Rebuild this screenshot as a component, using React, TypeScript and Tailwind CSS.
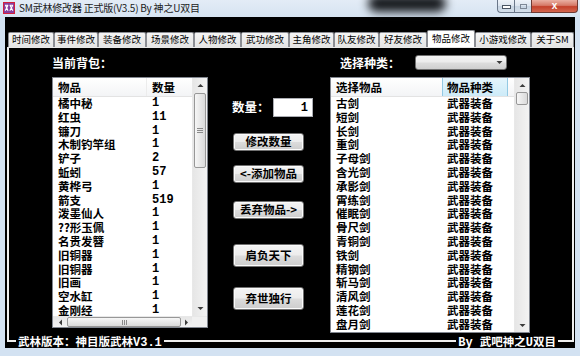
import React from "react";

const CJK = "font-['Noto_Sans_CJK_SC','Noto_Sans',sans-serif]";
const MONO = "font-['Liberation_Mono','Noto_Sans_CJK_SC',monospace]";

const tabs = [
  { label: "时间修改", w: "w-[46px]" },
  { label: "事件修改", w: "w-[44px]" },
  { label: "装备修改", w: "w-[48px]" },
  { label: "场景修改", w: "w-[48px]" },
  { label: "人物修改", w: "w-[47px]" },
  { label: "武功修改", w: "w-[48px]" },
  { label: "主角修改", w: "w-[45px]" },
  { label: "队友修改", w: "w-[45px]" },
  { label: "好友修改", w: "w-[48px]" },
  { label: "物品修改", w: "w-[48px]", sel: true },
  { label: "小游戏修改", w: "w-[56px]" },
  { label: "关于SM", w: "w-[43px]" },
];

const bag: [string, string][] = [
  ["橘中秘", "1"],
  ["红虫", "11"],
  ["镰刀", "1"],
  ["木制钓竿组", "1"],
  ["铲子", "2"],
  ["蚯蚓", "57"],
  ["黄桦弓", "1"],
  ["箭支", "519"],
  ["泼墨仙人", "1"],
  ["??形玉佩", "1"],
  ["名贵发簪", "1"],
  ["旧铜器", "1"],
  ["旧铜器", "1"],
  ["旧画", "1"],
  ["空水缸", "1"],
  ["金刚经", "1"],
];

const items = [
  "古剑", "短剑", "长剑", "重剑", "子母剑", "含光剑", "承影剑", "霄练剑", "催眠剑",
  "骨尺剑", "青铜剑", "铁剑", "精钢剑", "斩马剑", "清风剑", "莲花剑", "盘月剑",
];

function Tri({ dir }: { dir: "up" | "down" | "left" | "right" }) {
  const d =
    dir === "up"
      ? "M0.5 4 L3.5 1 L6.5 4 Z"
      : dir === "down"
      ? "M0.5 1 L3.5 4 L6.5 1 Z"
      : dir === "left"
      ? "M4 0.5 L1 3.5 L4 6.5 Z"
      : "M1 0.5 L4 3.5 L1 6.5 Z";
  const w = dir === "up" || dir === "down" ? 7 : 5;
  const h = dir === "up" || dir === "down" ? 5 : 7;
  return (
    <svg width={w} height={h} viewBox={`0 0 ${w} ${h}`}>
      <path d={d} fill="#3c3c3c" />
    </svg>
  );
}

function Grip({ vertical }: { vertical: boolean }) {
  return vertical ? (
    <div className="flex flex-col gap-[1px]">
      <div className="w-[6px] h-[1px] bg-[#8a8a8a]" />
      <div className="w-[6px] h-[1px] bg-[#8a8a8a]" />
      <div className="w-[6px] h-[1px] bg-[#8a8a8a]" />
    </div>
  ) : (
    <div className="flex gap-[1px]">
      <div className="w-[1px] h-[5px] bg-[#8a8a8a]" />
      <div className="w-[1px] h-[5px] bg-[#8a8a8a]" />
      <div className="w-[1px] h-[5px] bg-[#8a8a8a]" />
    </div>
  );
}

function Btn({ label, h, mt }: { label: string; h: string; mt: string }) {
  return (
    <div
      className={`${mt} ${h} w-[71px] ml-[25px] flex items-center justify-center rounded-[3px] border border-[#707070] bg-[linear-gradient(#f4f4f4_0%,#ececec_48%,#dcdcdc_52%,#cdcdcd_100%)] shadow-[inset_0_0_0_1px_#fbfbfb] text-[11.5px] font-bold text-black leading-none`}
    >
      {label}
    </div>
  );
}

export default function App() {
  return (
    <div className={`w-[580px] h-[356px] bg-[#d3e2f2] flex flex-col overflow-hidden ${CJK}`}>
      {/* title bar */}
      <div className="relative h-[17px] flex items-start bg-[linear-gradient(#e3ecf6,#d6e3f1)]">
        <div className="absolute left-[368px] top-[-5px] w-[78px] h-[17px] rounded-full bg-[#15181c] blur-[5px]" />
        <div className="pl-[3px] pt-[2px]">
          <svg width="12" height="12" viewBox="0 0 12 12">
            <rect x="0.5" y="0.5" width="11" height="11" fill="#8a3d9c" stroke="#d4203c" />
            <path d="M2 3.2h3.2M2.5 3.2l2.5 5.5M5 3.2l-2.8 5.5M6.6 3.2h3.4M7 3.2l2.8 5.5M9.8 3.2l-3 5.5" stroke="#ffffff" strokeWidth="1.1" fill="none" />
          </svg>
        </div>
        <div className="relative pl-[4px] pt-[1px] text-[10px] leading-[14px] text-[#1b1b1b] tracking-[-0.2px]">
          SM武林修改器 正式版(V3.5) By 神之U双目
        </div>
        <div className="flex-1" />
        <div className="relative flex pr-[2px]">
          <div className="w-[17px] h-[13px] border border-r-0 border-t-0 border-[#6a7789] rounded-bl-[4px] bg-[linear-gradient(#eef3f9_0%,#dbe4ee_50%,#c7d4e2_52%,#d4dfeb_100%)] flex items-end justify-center pb-[3px]">
            <div className="w-[7px] h-[2px] bg-white border border-[#4a5563] box-content" />
          </div>
          <div className="w-[17px] h-[13px] border border-r-0 border-t-0 border-[#6a7789] bg-[linear-gradient(#eef3f9_0%,#dbe4ee_50%,#c7d4e2_52%,#d4dfeb_100%)] flex items-center justify-center">
            <div className="w-[7px] h-[5px] border border-[#7d8795] bg-transparent" />
          </div>
          <div className="w-[47px] h-[13px] border border-t-0 border-[#6e3a33] rounded-br-[4px] bg-[linear-gradient(#eab0a3_0%,#d67a68_45%,#c4412b_55%,#d2664f_100%)] flex items-center justify-center text-white text-[10px] font-bold leading-none font-['Liberation_Sans',sans-serif]">
            x
          </div>
        </div>
      </div>

      {/* client area */}
      <div className="mx-[5px] w-[570px] h-[331px] bg-black flex flex-col">
        {/* tabs */}
        <div className="pt-[13px] pl-[3px] flex items-end h-[30px]">
          {tabs.map((t) =>
            t.sel ? (
              <div
                key={t.label}
                className={`${t.w} h-[17px] bg-white border border-b-0 border-[#8c8e94] rounded-t-[2px] flex items-center justify-center text-[9.5px] text-black leading-none`}
              >
                {t.label}
              </div>
            ) : (
              <div
                key={t.label}
                className={`${t.w} h-[15px] bg-[linear-gradient(#f5f5f5,#e4e4e4)] border border-b-0 border-[#8c8e94] rounded-t-[2px] flex items-center justify-center text-[9.5px] text-black leading-none`}
              >
                {t.label}
              </div>
            )
          )}
        </div>

        {/* panel */}
        <div className="ml-[2px] w-[567px] border-t border-[#e8e8e8]">
          <div className="h-[294px] border-x-2 border-b-2 border-[#efefef] flex items-start">
            {/* left column */}
            <div className="ml-[43px] w-[156px] flex flex-col">
              <div className="mt-[7px] h-[15px] leading-[15px] text-[12px] font-bold text-white">当前背包：</div>
              <div className="mt-[7px] h-[251px] border border-[#828790] bg-white flex flex-col">
                <div className="flex flex-1 min-h-0">
                  <div className="flex-1 min-w-0 overflow-hidden text-[11.5px] font-bold text-black">
                    <div className="h-[19px] flex border-b border-[#e3e3e3] bg-[linear-gradient(#ffffff,#f3f4f6)]">
                      <div className="w-[94px] pl-[5px] leading-[18px] border-r border-[#ececec]">物品</div>
                      <div className="pl-[5px] leading-[18px]">数量</div>
                    </div>
                    {bag.map(([n, q], i) => (
                      <div key={i} className="flex h-[13.8px] leading-[13.8px] whitespace-nowrap">
                        <div className="w-[94px] pl-[5px]">{n}</div>
                        <div className={`pl-[5px] text-[12px] ${MONO}`}>{q}</div>
                      </div>
                    ))}
                  </div>
                  {/* vertical scrollbar */}
                  <div className="w-[15px] flex flex-col bg-[linear-gradient(90deg,#e6e6e6,#f3f3f3)] border-l border-[#e8e8e8]">
                    <div className="h-[15px] flex items-center justify-center"><Tri dir="up" /></div>
                    <div className="h-[75px] mx-[1px] rounded-[2px] border border-[#979797] bg-[linear-gradient(90deg,#f6f6f6,#dadada)] flex items-center justify-center">
                      <Grip vertical />
                    </div>
                    <div className="flex-1" />
                    <div className="h-[15px] flex items-center justify-center"><Tri dir="down" /></div>
                  </div>
                </div>
                {/* horizontal scrollbar */}
                <div className="h-[11px] flex bg-[linear-gradient(#e6e6e6,#f3f3f3)] border-t border-[#e8e8e8]">
                  <div className="w-[14px] flex items-center justify-center"><Tri dir="left" /></div>
                  <div className="flex-1 my-[0px] rounded-[2px] border border-[#979797] bg-[linear-gradient(#f6f6f6,#dadada)] flex items-center justify-center">
                    <Grip vertical={false} />
                  </div>
                  <div className="w-[11px] flex items-center justify-center"><Tri dir="right" /></div>
                  <div className="w-[15px] bg-[#f0f0f0]" />
                </div>
              </div>
            </div>

            {/* middle column */}
            <div className="w-[122px] flex flex-col">
              <div className="mt-[50px] pl-[24px] flex items-center">
                <div className="w-[41px] text-[12.5px] font-bold text-white leading-none">数量：</div>
                <div className={`w-[40px] h-[19px] bg-white border border-[#abadb3] flex items-center justify-end pr-[4px] text-[12px] font-bold text-black ${MONO}`}>
                  1
                </div>
              </div>
              <Btn label="修改数量" h="h-[18px]" mt="mt-[16px]" />
              <Btn label="<-添加物品" h="h-[18px]" mt="mt-[14px]" />
              <Btn label="丢弃物品->" h="h-[18px]" mt="mt-[18px]" />
              <Btn label="肩负天下" h="h-[23px]" mt="mt-[25px]" />
              <Btn label="弃世独行" h="h-[23px]" mt="mt-[20px]" />
            </div>

            {/* right column */}
            <div className="w-[200px] flex flex-col">
              <div className="mt-[7px] h-[15px] flex items-center">
                <div className="w-[85px] pl-[10px] text-[12px] font-bold text-white leading-none">选择种类：</div>
                <div className="w-[92px] h-[15px] rounded-[3px] border border-[#707070] bg-[linear-gradient(#f4f4f4_0%,#ebebeb_48%,#dddddd_52%,#cfcfcf_100%)] flex items-center justify-end pr-[3px]">
                  <Tri dir="down" />
                </div>
              </div>
              <div className="mt-[7px] h-[256px] border border-[#828790] bg-white flex">
                <div className="flex-1 min-w-0 overflow-hidden text-[11.5px] font-bold text-black">
                  <div className="h-[19px] flex border-b border-[#e3e3e3] bg-[linear-gradient(#ffffff,#f3f4f6)]">
                    <div className="w-[111px] pl-[5px] leading-[18px]">选择物品</div>
                    <div className="w-[66px] pl-[4px] leading-[18px] border-x border-[#93c9e3] bg-[linear-gradient(#e4f5fc,#cdebf8)]">物品种类</div>
                  </div>
                  {items.map((n, i) => (
                    <div key={i} className="flex h-[13.8px] leading-[13.8px] whitespace-nowrap">
                      <div className="w-[111px] pl-[5px]">{n}</div>
                      <div className="pl-[5px]">武器装备</div>
                    </div>
                  ))}
                </div>
                <div className="w-[15px] flex flex-col bg-[linear-gradient(90deg,#e6e6e6,#f3f3f3)] border-l border-[#e8e8e8]">
                  <div className="h-[14px] flex items-center justify-center"><Tri dir="up" /></div>
                  <div className="h-[13px] mx-[1px] rounded-[2px] border border-[#979797] bg-[linear-gradient(90deg,#f6f6f6,#dadada)]" />
                  <div className="flex-1" />
                  <div className="h-[14px] flex items-center justify-center"><Tri dir="down" /></div>
                </div>
              </div>
            </div>
          </div>

          {/* bottom labels on groupbox line */}
          <div className="-mt-[8px] h-[14px] flex justify-between pl-[9px] pr-[16px] text-[11.5px] font-bold text-white leading-[14px]">
            <span className="bg-black px-[2px] whitespace-nowrap">
              武林版本：神目版武林<span className={`text-[12px] ${MONO}`}>V3.1</span>
            </span>
            <span className="bg-black px-[2px] whitespace-nowrap">
              <span className={`text-[12px] ${MONO}`}>By </span>武吧神之<span className={`text-[12px] ${MONO}`}>U</span>双目
            </span>
          </div>
        </div>
      </div>
    </div>
  );
}
